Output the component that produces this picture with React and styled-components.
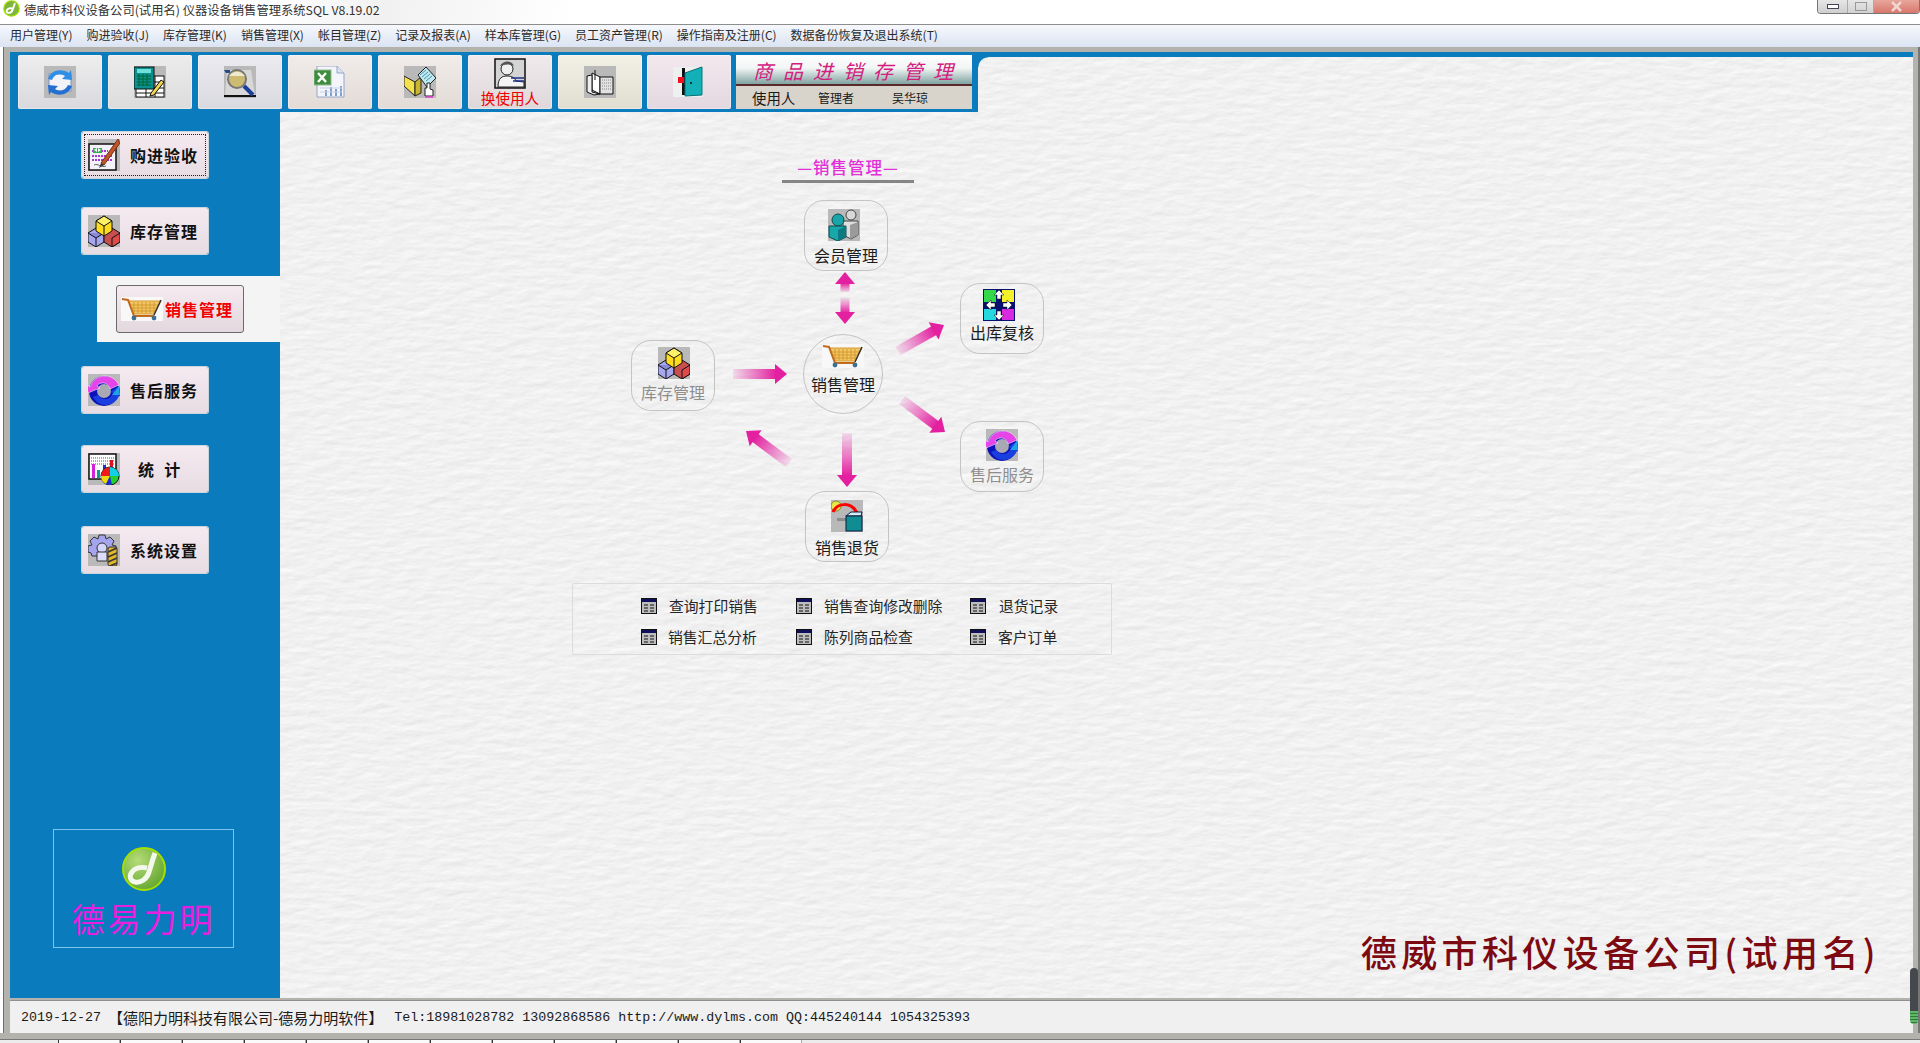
import React from 'react';
import styled, { createGlobalStyle } from 'styled-components';

const Global = createGlobalStyle`
  html, body, #root { margin: 0; height: 100%; }
  body { overflow: hidden; font-family: "Noto Sans CJK SC", "Liberation Sans", sans-serif; background: #fff; }
  * { box-sizing: border-box; }
`;

const CJK = `"Noto Sans CJK SC", "Liberation Sans", sans-serif`;

const Window = styled.div`
  width: 1920px;
  height: 1043px;
  display: flex;
  flex-direction: column;
  overflow: hidden;
`;

const TitleBar = styled.div`
  height: 24px;
  flex: none;
  display: flex;
  align-items: flex-start;
  padding: 0 0 0 3px;
  gap: 4px;
  background: linear-gradient(100deg, #fff 0, #fff 14%, #f1f1f1 20%, #fff 30%, #fff 100%);
`;

const TitleText = styled.span`
  font-size: 12.3px;
  line-height: 20px;
  color: #333;
  white-space: nowrap;
`;

const WindowButtons = styled.div`
  margin-left: auto;
  display: flex;
  height: 14px;
  border: 1px solid #777;
  border-top: 0;
  border-radius: 0 0 4px 4px;
  overflow: hidden;
`;

const WindowButton = styled.div`
  width: ${p => p.$w}px;
  display: flex;
  align-items: center;
  justify-content: center;
  background: ${p => p.$bg};
  border-left: 1px solid #aaa;
  &:first-child { border-left: 0; }
`;

const MenuBar = styled.div`
  height: 23px;
  flex: none;
  display: flex;
  align-items: center;
  gap: 14px;
  padding: 0 0 4px 10px;
  border-top: 1px solid #8d8d8d;
  background: linear-gradient(#f6f8fc, #dbe4f3);
  font-size: 12px;
  color: #2a2a2a;
  white-space: nowrap;
`;

const Frame = styled.div`
  flex: 1;
  display: flex;
  min-height: 0;
  background: #b4b2ac;
  border-left: 1px solid #fff;
`;

const LeftEdge = styled.div`
  width: 9px;
  flex: none;
  border-left: 2px solid #fff;
  box-shadow: inset 1px 0 0 #6e6e6e;
`;

const Center = styled.div`
  flex: 1;
  display: flex;
  flex-direction: column;
  padding-top: 5px;
  min-width: 0;
`;

const RightEdge = styled.div`
  width: 7px;
  flex: none;
  position: relative;
  background: #b4b2ac;
  border-right: 2px solid #777;
`;

const ScrollThumb = styled.div`
  position: absolute;
  left: -3px;
  top: 921px;
  width: 8px;
  height: 56px;
  border-radius: 4px;
  background:
    repeating-linear-gradient(#5fb868 0 2px, #2f7a3a 2px 3px) 0 100% / 100% 13px no-repeat,
    #45494d;
`;

const Workspace = styled.div`
  flex: 1;
  min-height: 0;
  display: grid;
  grid-template-columns: 270px 698px 1fr;
  grid-template-rows: 55px 1fr;
  border-top: 5px solid #0a7cbd;
`;

const ToolbarBand = styled.div`
  grid-area: 1 / 1 / 2 / 3;
  position: relative;
  z-index: 2;
  display: flex;
  align-items: flex-start;
  gap: 6px;
  height: 57px;
  margin-top: -2px;
  padding: 0 6px 0 8px;
  background: #0a7cbd;
  &::after {
    content: "";
    position: absolute;
    left: 100%;
    top: 2px;
    width: 10px;
    height: 10px;
    background: radial-gradient(circle at 100% 100%, transparent 9px, #0a7cbd 10px);
  }
`;

const ToolButton = styled.div`
  width: 84px;
  height: 54px;
  flex: none;
  margin-right: ${p => p.$mr || 0}px;
  display: flex;
  flex-direction: column;
  align-items: center;
  justify-content: ${p => (p.$stacked ? 'flex-start' : 'center')};
  padding-top: ${p => (p.$stacked ? 3 : 0)}px;
  border-radius: 2px;
  background: linear-gradient(${p => p.$top}, ${p => p.$bottom});
  box-shadow: inset 0 0 0 1px rgba(255, 255, 255, 0.35);
`;

const ToolLabel = styled.span`
  font-size: 14.6px;
  line-height: 18px;
  color: #f00000;
  margin-top: -1px;
  white-space: nowrap;
`;

const BrandPanel = styled.div`
  width: 236px;
  height: 54px;
  flex: none;
  display: flex;
  flex-direction: column;
  background: #d8d4cc;
`;

const BrandTop = styled.div`
  height: 31px;
  flex: none;
  padding-left: 17px;
  font: italic 400 20px/31px ${CJK};
  letter-spacing: 10px;
  color: #d3207f;
  white-space: nowrap;
  border-bottom: 2px solid #5a2a2a;
  background: linear-gradient(#fdfdfd 0, #f2f6f5 45%, #7fa3a0 100%);
`;

const BrandRow = styled.div`
  flex: 1;
  display: grid;
  grid-template-columns: 66px 74px 1fr;
  align-items: center;
  padding-left: 16px;
  color: #1a1a1a;
  font-size: 12px;
`;

const BrandBig = styled.span`
  font-size: 14.4px;
`;

const Sidebar = styled.div`
  grid-area: 2 / 1 / 3 / 2;
  z-index: 1;
  display: flex;
  flex-direction: column;
  align-items: flex-start;
  background: #0a7cbd;
`;

const SideButton = styled.div`
  width: 126px;
  height: 46px;
  margin: ${p => p.$top}px 0 0 72px;
  flex: none;
  display: flex;
  align-items: center;
  padding-left: 6px;
  gap: ${p => p.$gap || 10}px;
  border-radius: 2px;
  font-size: 16px;
  font-weight: 700;
  letter-spacing: ${p => p.$spacing || 1}px;
  color: #111;
  white-space: nowrap;
  background: linear-gradient(#f6eaf1, #e6dce2);
  outline: ${p => (p.$focused ? '1px dotted #222' : 'none')};
  outline-offset: -3px;
  box-shadow: 0 0 0 1px #c9d6e0;
`;

const ActiveSlot = styled.div`
  width: 183px;
  height: 66px;
  margin: 22px 0 0 87px;
  padding: 9px 0 0 19px;
  flex: none;
  background: #f4f4f4;
`;

const ActiveButton = styled.div`
  width: 128px;
  height: 48px;
  display: flex;
  align-items: center;
  gap: 2px;
  padding-left: 4px;
  border-radius: 3px;
  border: 1px solid #6a6a6a;
  font-size: 16px;
  font-weight: 700;
  letter-spacing: 1px;
  color: #f00000;
  white-space: nowrap;
  background: linear-gradient(#f6eaf1, #e2d8de);
`;

const LogoBox = styled.div`
  width: 181px;
  height: 119px;
  margin: auto 0 50px 43px;
  flex: none;
  display: flex;
  flex-direction: column;
  align-items: center;
  padding-top: 17px;
  border: 1px solid #7cc4ec;
`;

const LogoText = styled.div`
  font-size: 33px;
  line-height: 42px;
  margin-top: 6px;
  letter-spacing: 3px;
  color: #e81ee0;
  white-space: nowrap;
`;

const Paper = styled.div`
  grid-area: 1 / 2 / 3 / 4;
  position: relative;
  overflow: hidden;
  display: flex;
  flex-direction: column;
  padding: 103px 0 0 292px;
  background: #f1f1f0;
`;

const PaperGrain = styled.svg`
  position: absolute;
  inset: 0;
  width: 100%;
  height: 100%;
  pointer-events: none;
`;

const Diagram = styled.div`
  position: relative;
  width: 540px;
  height: 423px;
  flex: none;
`;

const DiagramTitle = styled.div`
  position: absolute;
  left: 210px;
  top: 0;
  width: 132px;
  height: 23px;
  text-align: center;
  font-size: 16.5px;
  line-height: 15px;
  letter-spacing: 1px;
  font-weight: 500;
  color: #e22fd8;
  white-space: nowrap;
  border-bottom: 3px solid #858585;
`;

const Node = styled.div`
  position: absolute;
  left: ${p => p.$x}px;
  top: ${p => p.$y}px;
  width: ${p => p.$w || 84}px;
  height: ${p => p.$h || 71}px;
  border: 1px solid #c4c4c4;
  border-radius: ${p => (p.$round ? '50%' : '20px')};
  display: flex;
  flex-direction: column;
  align-items: center;
  padding-top: ${p => p.$pad}px;
  font-size: 16px;
  line-height: 22px;
  color: ${p => (p.$dim ? '#8e8e8e' : '#1c1c1c')};
  white-space: nowrap;
`;

const NodeIcon = styled.div`
  display: flex;
  margin-left: ${p => p.$dx || 0}px;
`;

const NodeLabel = styled.span`
  margin-top: ${p => p.$gap}px;
`;

const Arrows = styled.svg`
  position: absolute;
  inset: 0;
  width: 540px;
  height: 423px;
  pointer-events: none;
`;

const LinkBox = styled.div`
  width: 540px;
  height: 72px;
  flex: none;
  position: relative;
  display: grid;
  grid-template-columns: 155px 174px 1fr;
  grid-auto-rows: 31px;
  align-content: center;
  padding: 4px 0 0 68px;
  border: 1px solid #dcdcdc;
  border-radius: 2px;
`;

const LinkItem = styled.div`
  display: flex;
  align-items: center;
  gap: ${p => p.$gap || 12}px;
  font-size: 14.8px;
  color: #262626;
  white-space: nowrap;
`;

const CompanyName = styled.div`
  position: relative;
  margin: auto 33px 24px 0;
  align-self: flex-end;
  font-size: 36px;
  line-height: 46px;
  letter-spacing: 4.4px;
  font-weight: 500;
  color: #7d0a10;
  white-space: nowrap;
`;

const StatusBar = styled.div`
  height: 33px;
  flex: none;
  display: flex;
  align-items: center;
  padding-left: 11px;
  border-top: 1px solid #8f8f8f;
  margin-top: 2px;
  background: #f0f0f0;
  font-family: "Liberation Mono", monospace;
  font-size: 13.33px;
  color: #1a1a1a;
  white-space: pre;
`;

const StatusCn = styled.span`
  font-family: ${CJK};
  font-size: 15px;
  margin-left: -1px;
  padding-right: 3px;
`;

const BottomStrip = styled.div`
  height: 6px;
  flex: none;
  background: #b4b2ac;
`;

const TaskTabs = styled.div`
  height: 4px;
  flex: none;
  display: flex;
  padding-left: 58px;
  background: #ececec;
  border-top: 1px solid #777;
`;

const TaskTab = styled.div`
  width: 62px;
  flex: none;
  background: #fafafa;
  border-left: 1px solid #333;
  border-right: 1px solid #aaa;
`;

/* 32px program icons, all on the grey bitmap backing of the old app */
const Ic = ({ children, size = 32, w, h }) => (
  <svg width={w || size} height={h || size} viewBox={`0 0 ${w || 32} ${h || 32}`} style={{ flex: 'none' }}>
    {children}
  </svg>
);

const Back = () => <rect width="32" height="32" fill="#b9b9b9" />;

const RefreshMail = () => (
  <Ic>
    <Back />
    <rect x="5" y="8" width="22" height="17" fill="#f1f3f8" stroke="#7d93c4" />
    <rect x="23" y="9" width="4" height="4" fill="#d08a55" />
    <path d="M4 13C6 4 18 2 25 7l2-3 1 10-10-1 3-3C16 7 10 8 8 14z" fill="#2f8fe8" />
    <path d="M28 20c-3 9-14 11-21 6l-2 3-1-10 10 1-3 3c5 3 10 2 13-4z" fill="#2470d0" />
  </Ic>
);

const CalcSheet = () => (
  <Ic>
    <Back />
    <rect x="2" y="10" width="28" height="21" fill="#fff" stroke="#111" />
    <path d="M2 16h28M2 22h28M2 27h28M12 10v21M21 10v21" stroke="#111" fill="none" />
    <rect x="0" y="1" width="20" height="22" fill="#0b8f8f" stroke="#111" />
    <rect x="3" y="3" width="14" height="4" fill="#6fe0d8" />
    <path d="M3 10h14M3 13h14M3 16h14M3 19h14M5 8v12M9 8v12M13 8v12" stroke="#063" fill="none" />
    <path d="M17 27l10-13 3 2-10 13-4 1z" fill="#f0d84a" stroke="#111" />
  </Ic>
);

const Magnifier = () => (
  <Ic>
    <Back />
    <path d="M1 30L3 4h24l4 26z" fill="#d8d8d8" />
    <path d="M0 30h32" stroke="#111" strokeWidth="2" />
    <path d="M0 4h6v3H2z" fill="#224a8f" />
    <circle cx="13" cy="13" r="9" fill="#cdbb72" stroke="#777" strokeWidth="2" />
    <path d="M5 10c5-6 12-5 16 0" fill="#efe9cf" />
    <path d="M20 20l9 9" stroke="#1d3f9a" strokeWidth="4" />
  </Ic>
);

const ExcelDoc = () => (
  <Ic>
    <path d="M3 0h20l7 7v24H3z" fill="#f3f5fa" stroke="#93a6c8" />
    <path d="M23 0v7h7" fill="#dbe3f2" stroke="#93a6c8" />
    <rect x="0" y="4" width="17" height="15" fill="#3d8d3d" stroke="#93b893" />
    <path d="M4 7l8 9M12 7l-8 9" stroke="#fff" strokeWidth="2.4" />
    <path d="M12 30v-6M17 30v-9M22 30v-7M27 30v-10" stroke="#7f9fd0" strokeWidth="2" />
    <path d="M6 22h22M6 26h22" stroke="#c7d2e6" />
  </Ic>
);

const FolderHand = () => (
  <Ic>
    <Back />
    <path d="M0 10l11 6v14L0 20z" fill="#f3e14d" stroke="#222" />
    <path d="M11 16l6-5v16l-6 3z" fill="#c9b52f" stroke="#222" />
    <path d="M14 9l8-8 10 11-9 9z" fill="#bfeaf2" stroke="#222" />
    <path d="M16 9l6-5M18 11l6-5M20 13l6-5M22 15l6-5" stroke="#4a8fa8" />
    <path d="M21 30v-8h2v-5h3v6l3 1v6z" fill="#fff" stroke="#222" />
    <path d="M21 31h8" stroke="#e23fd0" strokeWidth="1.5" />
  </Ic>
);

const Person = () => (
  <Ic>
    <rect x="1" y="1" width="30" height="29" fill="#d4d4d4" stroke="#111" strokeWidth="1.5" />
    <circle cx="13" cy="11" r="6" fill="#efefef" stroke="#222" />
    <path d="M4 29c0-9 4-11 9-11s8 2 9 5l8 1v5z" fill="#f4f4f4" stroke="#222" />
    <path d="M17 20h13M19 23h11" stroke="#1c2f8f" strokeWidth="1.5" />
    <path d="M6 8c3-6 12-6 14 0-4-2-9-2-14 0z" fill="#555" />
  </Ic>
);

const Book = () => (
  <Ic>
    <Back />
    <path d="M8 7l8 4v17l-8-4z" fill="#fff" stroke="#111" />
    <path d="M3 10l5-1v17l8 2-6 1-7-3z" fill="#eee" stroke="#111" />
    <path d="M16 11h13v17H16z" fill="#e2e2e2" stroke="#111" />
    <path d="M18 14h9M18 17h9M18 20h9M18 23h9" stroke="#888" strokeDasharray="1 1" />
    <path d="M11 4v10" stroke="#111" />
  </Ic>
);

const Door = () => (
  <Ic>
    <rect x="0" y="1" width="30" height="30" fill="#ecf0ef" />
    <rect x="9" y="2" width="3" height="27" fill="#111" />
    <path d="M12 7l17-6v28l-17 1z" fill="#14b0b8" stroke="#0a6f75" />
    <circle cx="18" cy="17" r="1" fill="#111" />
    <rect x="5" y="11" width="6" height="6" fill="#f01020" />
  </Ic>
);

const PenForm = () => (
  <Ic>
    <Back />
    <rect x="1" y="5" width="27" height="26" fill="#f4f2f8" stroke="#111" strokeWidth="1.5" />
    <path d="M4 12h16M4 17h20M4 21h20" stroke="#a43bd0" strokeWidth="2" strokeDasharray="2 1" />
    <path d="M5 9h9v5H5z" fill="#2fb04a" />
    <path d="M6 11l3-2v4zM13 11l-3-2v4z" fill="#fff" />
    <path d="M30 0L13 24l3 2L32 4z" fill="#c0552a" stroke="#7a3010" />
    <path d="M13 24l-2 5 5-3z" fill="#333" />
    <path d="M6 26c4-2 7 3 12 1" stroke="#555" fill="none" />
  </Ic>
);

const Cubes = () => (
  <Ic>
    <Back />
    <path d="M0 18l8-5 8 5v9l-8 5-8-5z" fill="#a7a7ef" stroke="#111" />
    <path d="M0 18l8 5 8-5M8 23v9" stroke="#111" fill="#8a8ad8" />
    <path d="M16 18l8-5 8 5v9l-8 5-8-5z" fill="#c94f4f" stroke="#111" />
    <path d="M32 18l-8 5v9l8-5z" fill="#e04a4a" stroke="#111" />
    <path d="M8 6l8-5 8 5v10l-8 5-8-5z" fill="#ffdc1e" stroke="#111" />
    <path d="M8 6l8 5 8-5-8-5z" fill="#fff06a" stroke="#111" />
    <path d="M16 11v10" stroke="#111" />
  </Ic>
);

const Cart = ({ w = 42, h = 24 }) => (
  <Ic w={w} h={h}>
    <rect width="42" height="24" fill="#f8f8f8" />
    <path d="M8 4h32l-7 13H12z" fill="#f1c668" stroke="#d59a2c" />
    <path d="M13 5v11M17 5v11M21 5v11M25 5v11M29 5v11M33 5v11M10 8h28M11 11h25M12 14h23" stroke="#d59a2c" />
    <path d="M1 2l6 1 6 16h20" stroke="#c26a1e" strokeWidth="2" fill="none" />
    <path d="M40 3l-7 15" stroke="#333" strokeWidth="1.5" />
    <circle cx="13" cy="21" r="2.4" fill="#3d6f90" />
    <circle cx="33" cy="21" r="2.4" fill="#3d6f90" />
  </Ic>
);

const CycleBall = () => (
  <Ic>
    <Back />
    <circle cx="16" cy="17" r="15" fill="#0c12b8" />
    <circle cx="16" cy="17" r="7" fill="#a9a9b4" />
    <path d="M2 13C5 5 11 2 17 2c6 0 11 3 14 9l-9 4c-1-4-4-6-7-6-3 0-5 1-6 3l3 2-12 5-2-9z" fill="#e545e8" stroke="#fff" strokeWidth=".5" />
    <path d="M5 23c3 5 7 8 12 8 7 0 12-4 14-9l3 1-3-11-9 6 3 1c-2 4-4 6-8 6-3 0-5-1-7-4z" fill="#1a3fe0" />
    <path d="M24 21l7-9 1 9z" fill="#1ea2e8" />
  </Ic>
);

const ChartPie = () => (
  <Ic>
    <Back />
    <rect x="1" y="1" width="27" height="25" fill="#fff" stroke="#111" strokeWidth="1.5" />
    <path d="M3 5h23M3 8h23M3 11h23" stroke="#555" strokeDasharray="1 1" />
    <rect x="4" y="11" width="3" height="14" fill="#d322d8" />
    <rect x="9" y="17" width="3" height="8" fill="#11979c" />
    <rect x="15" y="12" width="3" height="13" fill="#2030d0" />
    <rect x="22" y="7" width="3" height="10" fill="#e01020" />
    <circle cx="22" cy="23" r="9" fill="#22d030" stroke="#111" />
    <path d="M22 23V14a9 9 0 0 1 9 9z" fill="#10d0e8" />
    <path d="M22 23H13a9 9 0 0 1 9-9z" fill="#f01818" />
    <path d="M22 23h-9a9 9 0 0 0 5 8z" fill="#f0d810" />
    <path d="M22 23l-4 8a9 9 0 0 0 6 1z" fill="#1830d0" />
  </Ic>
);

const GearBolt = () => (
  <Ic>
    <Back />
    <path d="M11 1h6l1 4 4-2 4 4-2 4 4 1v6l-4 1-1 3H4l-1-3-3-1v-6l4-1-2-4 4-4 4 2z" fill="#a5a5ef" stroke="#333" />
    <circle cx="14" cy="14" r="5" fill="#d6d6fa" stroke="#333" />
    <path d="M9 18h10v9H9z" fill="#dcdcfc" stroke="#333" />
    <rect x="20" y="13" width="9" height="19" rx="2" fill="#e3b72a" stroke="#333" />
    <path d="M20 18l9-4M20 23l9-4M20 28l9-4M22 32l7-3" stroke="#333" strokeWidth="1.5" />
  </Ic>
);

const Members = () => (
  <Ic>
    <Back />
    <circle cx="23" cy="6" r="5" fill="#d8d8d8" stroke="#444" />
    <path d="M15 12h15v14l-7 4-8-4z" fill="#dedede" stroke="#444" />
    <path d="M22 16l8-3v13l-8 4z" fill="#9a9a9a" />
    <circle cx="10" cy="11" r="6" fill="#18a4a8" stroke="#0a4a4c" />
    <path d="M1 17h17v11l-8 4-9-4z" fill="#18a8ac" stroke="#0a4a4c" />
    <path d="M10 21l8-4v11l-8 4z" fill="#0c7a80" />
  </Ic>
);

const SwapTiles = () => (
  <Ic>
    <rect width="32" height="32" fill="#06106f" />
    <rect x="1" y="1" width="12" height="12" fill="#34d84a" />
    <rect x="19" y="1" width="12" height="12" fill="#f4f02a" />
    <rect x="1" y="20" width="12" height="11" fill="#24d8e0" />
    <rect x="19" y="20" width="12" height="11" fill="#d82ae0" />
    <path d="M16 1l5 5h-3v4h-4V6h-3zM16 31l-5-5h3v-4h4v4h3zM3 16l5-5v3h4v4H8v3zM29 16l-5 5v-3h-4v-4h4v-3z" fill="#fff" stroke="#111" strokeWidth=".5" />
  </Ic>
);

const ReturnBox = () => (
  <Ic>
    <Back />
    <circle cx="5" cy="6" r="5" fill="#e8e84a" stroke="#8a8a20" />
    <path d="M2 12C6 3 20 1 26 13" stroke="#f00" strokeWidth="3" fill="none" />
    <path d="M22 12h8l-4 5z" fill="#f00" />
    <path d="M6 18h10v3H6z" fill="#8c8c8c" />
    <path d="M15 16l5-4h11l-1 4z" fill="#cfeef5" stroke="#111840" />
    <rect x="15" y="16" width="16" height="15" fill="#118c90" stroke="#111840" />
  </Ic>
);

const ListGlyph = () => (
  <Ic size={16} w={16} h={16}>
    <rect x=".5" y=".5" width="15" height="15" fill="#bdbdbd" stroke="#111" />
    <rect x="1" y="1" width="14" height="3" fill="#10105a" />
    <path d="M3 7h4M9 7h4M3 10h4M9 10h4M3 13h4M9 13h4" stroke="#111" />
  </Ic>
);

const LogoMark = () => (
  <svg width="44" height="44" viewBox="0 0 44 44">
    <defs>
      <radialGradient id="logoBall" cx="0.35" cy="0.3" r="0.8">
        <stop offset="0" stopColor="#b5dc78" />
        <stop offset="1" stopColor="#5fa32c" />
      </radialGradient>
    </defs>
    <circle cx="22" cy="22" r="21" fill="url(#logoBall)" stroke="#a6e000" strokeWidth="2" />
    <path d="M33 6c-3 8-4 13-6 19-2 7-8 11-14 10-5-1-6-6-3-10 4-5 11-5 15-4" fill="none" stroke="#f4f8ec" strokeWidth="5" />
  </svg>
);

const arrowList = [
  { id: 'a1', from: [273, 132], to: [273, 112], w: 9, head: 20 },
  { id: 'a2', from: [273, 138], to: [273, 164], w: 9, head: 20 },
  { id: 'a3', from: [161, 214], to: [215, 214], w: 10, head: 20 },
  { id: 'a4', from: [326, 191], to: [372, 165], w: 10, head: 20 },
  { id: 'a5', from: [330, 240], to: [373, 272], w: 10, head: 20 },
  { id: 'a6', from: [217, 303], to: [174, 271], w: 10, head: 20 },
  { id: 'a7', from: [275, 273], to: [275, 327], w: 10, head: 20 },
];

const Arrow = ({ id, from, to, w, head }) => {
  const [x1, y1] = from;
  const [x2, y2] = to;
  const len = Math.hypot(x2 - x1, y2 - y1);
  const deg = (Math.atan2(y2 - y1, x2 - x1) * 180) / Math.PI;
  const headLen = 12;
  return (
    <g transform={`translate(${x1} ${y1}) rotate(${deg})`}>
      <defs>
        <linearGradient id={id} x1="0" x2="1" y1="0" y2="0">
          <stop offset="0" stopColor="#e62aa8" stopOpacity="0.12" />
          <stop offset="1" stopColor="#e3209f" />
        </linearGradient>
      </defs>
      <rect x="0" y={-w / 2} width={len - headLen + 1} height={w} fill={`url(#${id})`} />
      <path d={`M${len - headLen} ${-head / 2}L${len} 0L${len - headLen} ${head / 2}z`} fill="#e3209f" />
    </g>
  );
};

const menus = [
  '用户管理(Y)', '购进验收(J)', '库存管理(K)', '销售管理(X)', '帐目管理(Z)',
  '记录及报表(A)', '样本库管理(G)', '员工资产管理(R)', '操作指南及注册(C)', '数据备份恢复及退出系统(T)',
];

const tools = [
  { key: 'sync', top: '#eeeeee', bottom: '#d9d9de', icon: <RefreshMail /> },
  { key: 'calc', top: '#ececec', bottom: '#dcdcdc', icon: <CalcSheet /> },
  { key: 'find', top: '#ebebf0', bottom: '#d9d9e0', icon: <Magnifier /> },
  { key: 'xls', top: '#f1ecea', bottom: '#e2dbd6', icon: <ExcelDoc /> },
  { key: 'share', top: '#f1ecea', bottom: '#e2dbd6', icon: <FolderHand /> },
  { key: 'user', top: '#f0eaec', bottom: '#dfd8da', icon: <Person />, label: '换使用人' },
  { key: 'book', top: '#f3f1e6', bottom: '#e0ded0', icon: <Book />, mr: -1 },
  { key: 'exit', top: '#f3e8ee', bottom: '#e4d8e0', icon: <Door />, mr: -1 },
];

const nodes = [
  { label: '会员管理', x: 232, y: 40, pad: 8, gap: 3, dx: -4, icon: <Members /> },
  { label: '出库复核', x: 388, y: 123, pad: 5, gap: 0, dx: -6, icon: <SwapTiles /> },
  { label: '库存管理', x: 59, y: 180, pad: 6, gap: 2, dx: 2, dim: true, icon: <Cubes /> },
  { label: '销售管理', x: 231, y: 174, w: 80, h: 80, pad: 9, gap: 5, round: true, icon: <Cart /> },
  { label: '售后服务', x: 388, y: 261, pad: 7, gap: 2, dim: true, icon: <CycleBall /> },
  { label: '销售退货', x: 233, y: 331, pad: 8, gap: 4, icon: <ReturnBox /> },
];

const links = [
  { text: '查询打印销售' }, { text: '销售查询修改删除' }, { text: '退货记录', gap: 13 },
  { text: '销售汇总分析', gap: 11 }, { text: '陈列商品检查' }, { text: '客户订单' },
];

const taskTabs = [1, 2, 3, 4, 5, 6, 7, 8, 9, 10, 11, 12];

export default function App() {
  return (
    <Window>
      <Global />
      <TitleBar>
        <svg width="17" height="17" viewBox="0 0 44 44">
          <circle cx="22" cy="22" r="20" fill="#7fb53c" stroke="#a6e000" strokeWidth="3" />
          <path d="M31 8c-3 8-4 12-6 17-2 6-7 9-12 8-4-1-5-5-2-8 3-4 9-4 13-3" fill="none" stroke="#fff" strokeWidth="5" />
        </svg>
        <TitleText>德威市科仪设备公司(试用名) 仪器设备销售管理系统SQL V8.19.02</TitleText>
        <WindowButtons>
          <WindowButton $w={29} $bg="linear-gradient(#e6e6e6,#cfcfcf)">
            <svg width="12" height="5"><rect x=".5" y=".5" width="11" height="4" fill="#fff" stroke="#445" /></svg>
          </WindowButton>
          <WindowButton $w={26} $bg="linear-gradient(#e6e6e6,#d2d2d2)">
            <svg width="12" height="9"><rect x=".5" y=".5" width="11" height="8" fill="none" stroke="#999" /></svg>
          </WindowButton>
          <WindowButton $w={46} $bg="linear-gradient(#e8a79c,#d8776c)">
            <svg width="13" height="11"><path d="M2 1l9 9M11 1l-9 9" stroke="#f2d6d2" strokeWidth="2.5" /></svg>
          </WindowButton>
        </WindowButtons>
      </TitleBar>
      <MenuBar>
        {menus.map(m => <span key={m}>{m}</span>)}
      </MenuBar>
      <Frame>
        <LeftEdge />
        <Center>
          <Workspace>
            <Paper>
              <PaperGrain aria-hidden="true">
                <filter id="grain" x="0" y="0" width="100%" height="100%" colorInterpolationFilters="sRGB">
                  <feTurbulence type="fractalNoise" baseFrequency="0.05 0.14" numOctaves="4" seed="7" />
                  <feDiffuseLighting surfaceScale="0.22" diffuseConstant="1.09" lightingColor="#ffffff">
                    <feDistantLight azimuth="60" elevation="60" />
                  </feDiffuseLighting>
                </filter>
                <rect width="100%" height="100%" filter="url(#grain)" />
              </PaperGrain>
              <Diagram>
                <Arrows viewBox="0 0 540 423">
                  {arrowList.map(a => <Arrow key={a.id} {...a} />)}
                </Arrows>
                <DiagramTitle>—销售管理—</DiagramTitle>
                {nodes.map(n => (
                  <Node key={n.label} $x={n.x} $y={n.y} $w={n.w} $h={n.h} $pad={n.pad} $round={n.round} $dim={n.dim}>
                    <NodeIcon $dx={n.dx}>{n.icon}</NodeIcon>
                    <NodeLabel $gap={n.gap}>{n.label}</NodeLabel>
                  </Node>
                ))}
              </Diagram>
              <LinkBox>
                {links.map(l => (
                  <LinkItem key={l.text} $gap={l.gap}><ListGlyph />{l.text}</LinkItem>
                ))}
              </LinkBox>
              <CompanyName>德威市科仪设备公司(试用名)</CompanyName>
            </Paper>
            <ToolbarBand>
              {tools.map(t => (
                <ToolButton key={t.key} $top={t.top} $bottom={t.bottom} $stacked={!!t.label} $mr={t.mr}>
                  {t.icon}
                  {t.label && <ToolLabel>{t.label}</ToolLabel>}
                </ToolButton>
              ))}
              <BrandPanel>
                <BrandTop>商品进销存管理</BrandTop>
                <BrandRow>
                  <BrandBig>使用人</BrandBig>
                  <span>管理者</span>
                  <span>吴华琼</span>
                </BrandRow>
              </BrandPanel>
            </ToolbarBand>
            <Sidebar>
              <SideButton $top={20} $focused><PenForm />购进验收</SideButton>
              <SideButton $top={30}><Cubes />库存管理</SideButton>
              <ActiveSlot>
                <ActiveButton><Cart />销售管理</ActiveButton>
              </ActiveSlot>
              <SideButton $top={25}><CycleBall />售后服务</SideButton>
              <SideButton $top={33} $gap={18} $spacing={0}><ChartPie />统&nbsp;&nbsp;计</SideButton>
              <SideButton $top={35}><GearBolt />系统设置</SideButton>
              <LogoBox>
                <LogoMark />
                <LogoText>德易力明</LogoText>
              </LogoBox>
            </Sidebar>
          </Workspace>
          <StatusBar>
            {'2019-12-27 '}<StatusCn>【德阳力明科技有限公司-德易力明软件】</StatusCn>
            {' Tel:18981028782 13092868586 http://www.dylms.com QQ:445240144 1054325393'}
          </StatusBar>
        </Center>
        <RightEdge><ScrollThumb /></RightEdge>
      </Frame>
      <BottomStrip />
      <TaskTabs>
        {taskTabs.map(t => <TaskTab key={t} />)}
      </TaskTabs>
    </Window>
  );
}
